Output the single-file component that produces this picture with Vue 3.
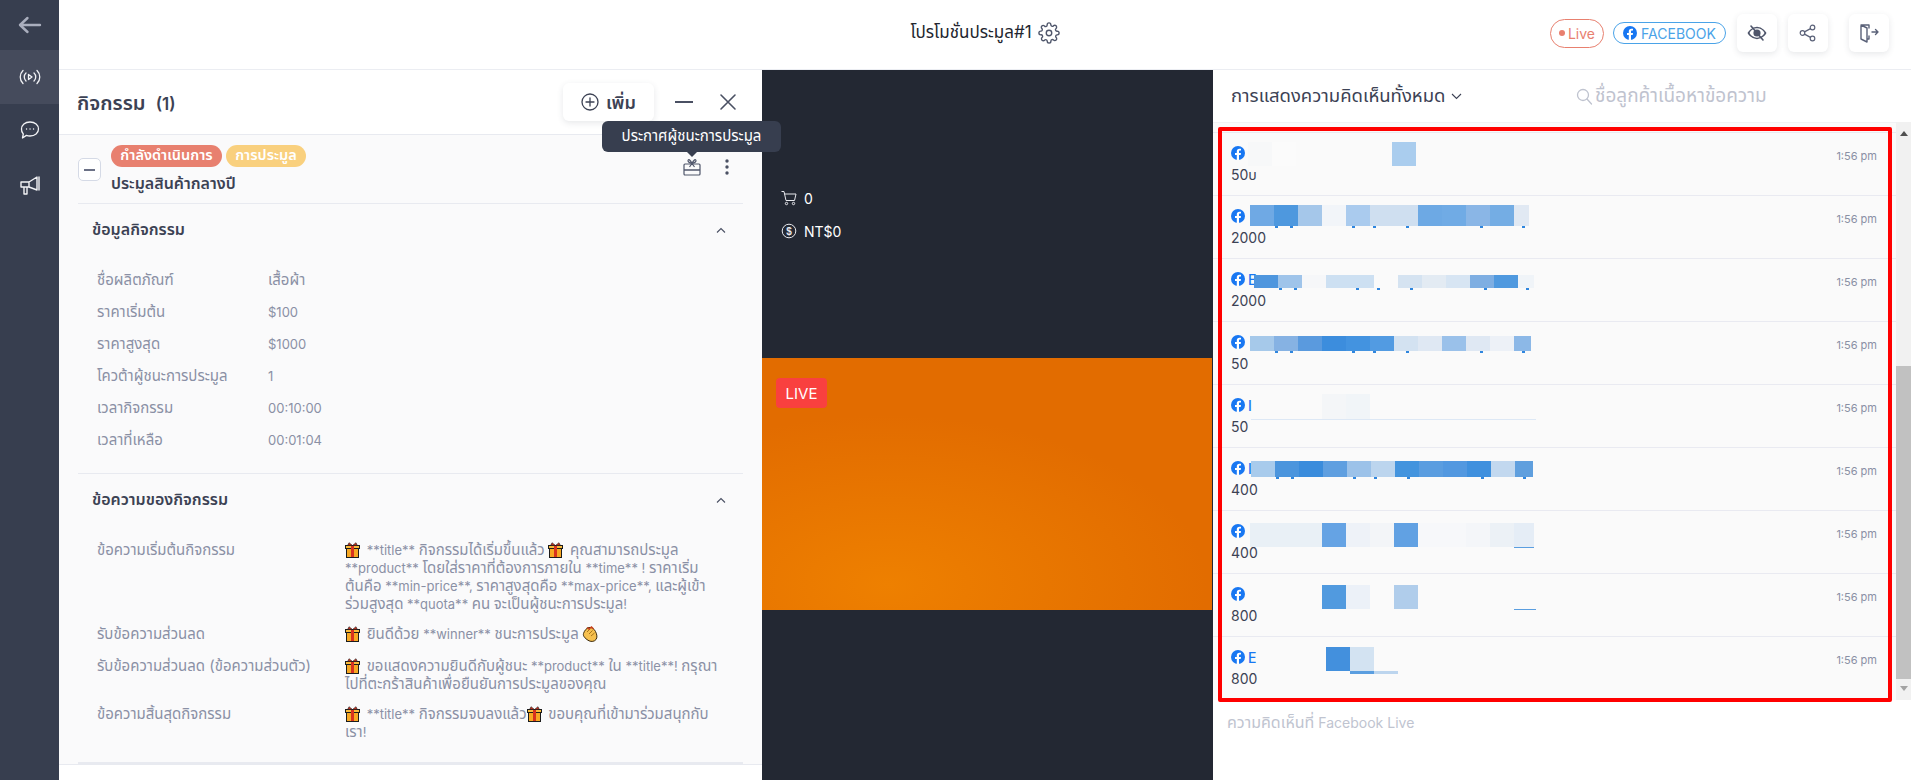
<script setup>
const infoRows = [
  ["ชื่อผลิตภัณฑ์", "เสื้อผ้า"],
  ["ราคาเริ่มต้น", "$100"],
  ["ราคาสูงสุด", "$1000"],
  ["โควต้าผู้ชนะการประมูล", "1"],
  ["เวลากิจกรรม", "00:10:00"],
  ["เวลาที่เหลือ", "00:01:04"],
]

// "gift" and "clap" are drawn as svg, everything else is plain text
const messageRows = [
  {
    label: "ข้อความเริ่มต้นกิจกรรม",
    parts: ["gift", " **title** กิจกรรมได้เริ่มขึ้นแล้ว ", "gift", " คุณสามารถประมูล\n**product** โดยใส่ราคาที่ต้องการภายใน **time** ! ราคาเริ่ม\nต้นคือ **min-price**, ราคาสูงสุดคือ **max-price**, และผู้เข้า\nร่วมสูงสุด **quota** คน จะเป็นผู้ชนะการประมูล!"],
  },
  { label: "รับข้อความส่วนลด", parts: ["gift", " ยินดีด้วย **winner** ชนะการประมูล ", "clap"] },
  {
    label: "รับข้อความส่วนลด (ข้อความส่วนตัว)",
    parts: ["gift", " ขอแสดงความยินดีกับผู้ชนะ **product** ใน **title**! กรุณา\nไปที่ตะกร้าสินค้าเพื่อยืนยันการประมูลของคุณ"],
  },
  {
    label: "ข้อความสิ้นสุดกิจกรรม",
    parts: ["gift", " **title** กิจกรรมจบลงแล้ว", "gift", " ขอบคุณที่เข้ามาร่วมสนุกกับ\nเรา!"],
  },
]

// the Thai fallback runs smaller than the latin font, so it gets its own size
const thaiRe = /([\u0E00-\u0E7F]+)/
const runs = (text) => text.split(thaiRe).filter(Boolean)
const isThai = (text) => thaiRe.test(text)

// descender specks left under the blurred names
const specks = [25, 40, 102, 123, 156, 230, 272].map((x) => [x, 3, 2, "#2f86de"])

// names are blurred in the reference, so each row keeps its mosaic cells
const comments = [
  { initial: "", text: "50บ", x: 35, y: 9, h: 24, cells: ["#f7f8f9", "#fbfbfb", null, null, null, null, "#aacdee"] },
  { initial: "", text: "2000", x: 37, y: 9, h: 21, last: 15, under: specks, cells: ["#6fa9e4", "#4e98de", "#a5c7ea", "#f2f5f9", "#aacbee", "#cfdff0", "#cfdff0", "#6da9e4", "#70abe5", "#8ab6e6", "#74ade4", "#e1e9f3"] },
  { initial: "E", text: "2000", x: 41, y: 16, h: 13, last: 16, under: specks, cells: ["#4e96de", "#9fc4ea", "#f6f7f9", "#cde0f2", "#cde0f2", null, "#d5e3f1", "#e3ebf3", "#d7e5f3", "#7eaee2", "#4f99df", "#f0f4f8"] },
  { initial: "", text: "50", x: 37, y: 14, h: 15, last: 17, under: specks, cells: ["#a6c9ea", "#86b2e3", "#5a9ade", "#3c8ddd", "#4393e0", "#529be2", "#d3e2f1", "#dfe8f3", "#9ac1ea", "#dfe8f3", "#edf1f7", "#8cb8e7"] },
  { initial: "I", text: "50", x: 37, y: 9, h: 25, under: [[1, 285, 1, "#dde8f5"]], cells: [null, null, null, "#f4f6f8", "#f1f5f8"] },
  { initial: "I", text: "400", x: 38, y: 13, h: 16, last: 18, under: specks, cells: ["#a8cbec", "#4b95dd", "#3a8cdc", "#5f9fe0", "#9cc2e9", "#bcd5ee", "#4394de", "#5a9de0", "#5298e0", "#3f90de", "#c2d8ef", "#5f9fde"] },
  { initial: "", text: "400", x: 37, y: 12, h: 24, last: 20, under: [[264, 20, 1, "#5a9ee0"]], cells: ["#e9f0f6", "#e9f0f6", "#e9f0f6", "#65a3e4", "#eef2f8", "#f3f5f8", "#61a1e3", "#f7f8fa", "#f7f8fa", "#f4f6f9", "#ecf1f6", "#e5edf6"] },
  { initial: "", text: "800", x: 37, y: 11, h: 24, under: [[264, 22, 1, "#5a9ee0"]], cells: [null, null, null, "#519adf", "#ecf1f8", null, "#b0cdeb"] },
  { initial: "E", text: "800", x: 113, y: 10, h: 24, under: [[24, 24, 3, "#5a9ee0"], [48, 24, 3, "#bcd5ee"]], cells: ["#4390dd", "#d3e3f2"] },
]
</script>

<template>
  <div class="page">
    <aside class="sidebar">
      <div class="side-item side-back">
        <svg width="24" height="20" viewBox="0 0 24 20" fill="none" stroke="#a9aebd" stroke-width="2.4" stroke-linecap="round" stroke-linejoin="round"><path d="M22 10H2M9.500 3L2 10l7.500 7" /></svg>
      </div>
      <div class="side-item side-active">
        <svg width="22" height="18" viewBox="0 0 22 18" fill="none" stroke="#f2f3f6" stroke-width="1.3" stroke-linecap="round" stroke-linejoin="round"><path d="M4 2.500a9 9 0 0 0 0 13M7 5a5.500 5.500 0 0 0 0 8M18 2.500a9 9 0 0 1 0 13M15 5a5.500 5.500 0 0 1 0 8M9.500 6.500v5l3.500-2.500z" /></svg>
      </div>
      <div class="side-item side-chat">
        <svg width="22" height="20" viewBox="0 0 22 20" fill="none" stroke="#f2f3f6" stroke-width="1.3" stroke-linecap="round" stroke-linejoin="round"><path d="M11 2c5 0 8.500 3 8.500 7s-3.500 7-8.500 7c-1.300 0-2.500-.2-3.600-.6L3.500 18l.8-4A6.600 6.600 0 0 1 2.500 9c0-4 3.500-7 8.500-7z" /><path d="M7.500 9h.1M11 9h.1M14.500 9h.1" /></svg>
      </div>
      <div class="side-item side-mega">
        <svg width="22" height="22" viewBox="0 0 22 22" fill="none" stroke="#f2f3f6" stroke-width="1.4" stroke-linecap="round" stroke-linejoin="round"><path d="M2 7h8l8-5v13l-8-3H2zM20 2v13M5 12v7h3v-7M10 7v5" /></svg>
      </div>
    </aside>

    <div class="main">
      <header class="topbar">
        <div></div>
        <div class="top-title">
          <span>โปรโมชั่นประมูล#1</span>
          <svg width="22" height="22" viewBox="0 0 24 24" fill="none" stroke="#4f566b" stroke-width="1.5" stroke-linecap="round" stroke-linejoin="round"><circle cx="12" cy="12" r="3" /><path d="M19.400 15a1.650 1.650 0 0 0 .33 1.820l.06.06a2 2 0 1 1-2.830 2.830l-.06-.06a1.650 1.650 0 0 0-2.820 1.170V21a2 2 0 1 1-4 0v-.09a1.650 1.650 0 0 0-2.800-1.170l-.06.06a2 2 0 1 1-2.830-2.830l.06-.06A1.650 1.650 0 0 0 3.090 14H3a2 2 0 1 1 0-4h.09a1.650 1.650 0 0 0 1.170-2.800l-.06-.06a2 2 0 1 1 2.830-2.830l.06.06A1.650 1.650 0 0 0 10 3.090V3a2 2 0 1 1 4 0v.09a1.650 1.650 0 0 0 2.800 1.170l.06-.06a2 2 0 1 1 2.830 2.830l-.06.06A1.650 1.650 0 0 0 20.910 10H21a2 2 0 1 1 0 4h-.09a1.650 1.650 0 0 0-1.510 1z" /></svg>
        </div>
        <div class="top-actions">
          <span class="pill-live"><i class="live-dot"></i>Live</span>
          <span class="pill-fb">
            <svg class="fb" width="14" height="14" viewBox="0 0 14 14"><circle cx="7" cy="7" r="7" fill="#1877f2" /><path d="M9.700 9l.3-2H8V5.700c0-.6.300-1.100 1.100-1.100h.9V2.900S9.200 2.800 8.400 2.800C6.800 2.800 5.800 3.700 5.800 5.500V7H4v2h1.800v5h2.200V9z" fill="#fff" /></svg>
            FACEBOOK
          </span>
          <button class="icon-btn">
            <svg width="20" height="18" viewBox="0 0 20 18" fill="none" stroke="#4f566b" stroke-width="1.600" stroke-linecap="round"><path d="M1.500 9S4.500 3.500 10 3.500 18.500 9 18.500 9 15.500 14.500 10 14.500 1.500 9 1.500 9z" /><circle cx="10" cy="9" r="2.800" fill="#4f566b" /><path d="M4 2l12 14" /></svg>
          </button>
          <button class="icon-btn">
            <svg width="18" height="18" viewBox="0 0 18 18" fill="none" stroke="#5a6178" stroke-width="1.200"><circle cx="13.500" cy="3.500" r="2.300" /><circle cx="3.500" cy="9" r="2.300" /><circle cx="13.500" cy="14.500" r="2.300" /><path d="M5.500 7.900l6-3.300M5.500 10.100l6 3.300" /></svg>
          </button>
          <button class="icon-btn exit-btn">
            <svg width="20" height="20" viewBox="0 0 20 20" fill="none" stroke="#5a6178" stroke-width="1.400" stroke-linecap="round" stroke-linejoin="round"><path d="M10 5V2H2v14l6 3V5L2 2M10 13v3H8M13 9h6M16.500 6.500L19 9l-2.500 2.500" /></svg>
          </button>
        </div>
      </header>

      <div class="content">
        <section class="panel">
          <div class="panel-head">
            <h2>กิจกรรม&nbsp; <span class="count">(1)</span></h2>
            <div class="panel-tools">
              <button class="add-btn">
                <svg width="18" height="18" viewBox="0 0 18 18" fill="none" stroke="#3c4254" stroke-width="1.300" stroke-linecap="round"><circle cx="9" cy="9" r="8" /><path d="M9 5v8M5 9h8" /></svg>
                <span class="add-text">เพิ่ม</span>
              </button>
              <svg class="tool-min" width="18" height="2" viewBox="0 0 18 2"><rect width="18" height="2" fill="#4a5063" /></svg>
              <svg class="tool-close" width="18" height="18" viewBox="0 0 18 18" stroke="#4a5063" stroke-width="1.600" stroke-linecap="round"><path d="M2 2l14 14M16 2L2 16" /></svg>
            </div>
            <div class="tooltip">ประกาศผู้ชนะการประมูล</div>
          </div>

          <div class="panel-body">
            <div class="item-head">
              <span class="collapse-box"><i></i></span>
              <div class="item-main">
                <div class="badges">
                  <span class="badge badge-red">กำลังดำเนินการ</span>
                  <span class="badge badge-yellow">การประมูล</span>
                </div>
                <div class="item-title">ประมูลสินค้ากลางปี</div>
              </div>
              <div class="item-tools">
                <svg width="18" height="18" viewBox="0 0 18 18" fill="none" stroke="#4f566b" stroke-width="1.200" stroke-linejoin="round"><rect x="1" y="6" width="16" height="11" rx="1" /><path d="M1 12h16" stroke-width="1.500" /><path d="M9 5.500C7.500 2.500 6 1 5.200 2 4.300 3.100 6 5 9 5.500zM9 5.500c1.500-3 3-4.500 3.800-3.500.9 1.100-.8 3-3.800 3.500zM9 5.500L6.500 9M9 5.500L11.500 9" /></svg>
                <svg width="4" height="16" viewBox="0 0 4 16" fill="#4a5063"><circle cx="2" cy="2" r="1.700" /><circle cx="2" cy="8" r="1.700" /><circle cx="2" cy="14" r="1.700" /></svg>
              </div>
            </div>

            <div class="section">
              <div class="section-head">
                <span class="section-title">ข้อมูลกิจกรรม</span>
                <svg width="10" height="6" viewBox="0 0 10 6" fill="none" stroke="#4a5063" stroke-width="1.100"><path d="M1 5.500l4-4 4 4" /></svg>
              </div>
              <div class="info-rows">
                <div v-for="row in infoRows" :key="row[0]" class="info-row">
                  <span class="info-label">{{ row[0] }}</span>
                  <span :class="{ th: isThai(row[1]) }">{{ row[1] }}</span>
                </div>
              </div>
            </div>

            <div class="section section-last">
              <div class="section-head">
                <span class="section-title">ข้อความของกิจกรรม</span>
                <svg width="10" height="6" viewBox="0 0 10 6" fill="none" stroke="#4a5063" stroke-width="1.100"><path d="M1 5.500l4-4 4 4" /></svg>
              </div>
              <div class="msg-rows">
                <div v-for="row in messageRows" :key="row.label" class="msg-row">
                  <span class="msg-label">{{ row.label }}</span>
                  <div class="msg-text">
                    <template v-for="(part, i) in row.parts" :key="i">
                      <svg v-if="part === 'gift'" class="emoji" width="15" height="16" viewBox="0 0 15 16"><rect x="1.500" y="6" width="12" height="9.500" fill="#f7a823" stroke="#1c1c1c" /><rect x=".5" y="3.500" width="14" height="3" fill="#f9bb3c" stroke="#1c1c1c" /><rect x="6" y="4" width="3" height="11" fill="#d8321f" /><path d="M7.500 3.500L4 .7 2.800 3.200zM7.500 3.500L11 .7l1.200 2.500z" fill="#d8321f" stroke="#1c1c1c" stroke-width=".6" /></svg>
                      <svg v-else-if="part === 'clap'" class="emoji" width="16" height="16" viewBox="0 0 16 16"><path d="M1.500 7.500C2.500 4.500 4.500 2 7 1.500c2.500-.5 5 1 6.500 4 1.500 3 2 6 .5 8s-4.500 2.500-7 1.300C4.500 13.500.5 10.500 1.500 7.500z" fill="#f6c04e" stroke="#3d2a0c" /><path d="M5 6l3-3M7 8l3.500-3.500M9 10l3.500-3" stroke="#a9741c" fill="none" /><path d="M5 1.500l2 1.500 2.500-2 2 2" stroke="#c8401e" stroke-width="1.400" fill="none" /></svg>
                      <template v-else>
                        <span v-for="(run, j) in runs(part)" :key="j" :class="{ th: isThai(run) }">{{ run }}</span>
                      </template>
                    </template>
                  </div>
                </div>
              </div>
            </div>
          </div>
        </section>

        <section class="stage">
          <div class="stats">
            <div class="stat">
              <svg width="16" height="16" viewBox="0 0 16 16" fill="none" stroke="#e8e9ee" stroke-width="1"><path d="M.5 1.500h2.500l2 9h8.500L15 4H3.500" /><circle cx="5.500" cy="13.500" r="1.200" /><circle cx="12.500" cy="13.500" r="1.200" /></svg>
              <span>0</span>
            </div>
            <div class="stat">
              <svg width="16" height="16" viewBox="0 0 16 16" fill="none" stroke="#e8e9ee" stroke-width="1"><circle cx="8" cy="8" r="6.800" /><text x="8" y="11.500" text-anchor="middle" font-size="10" font-weight="700" fill="#e8e9ee" stroke="none" font-family="'Liberation Sans', sans-serif">$</text></svg>
              <span>NT$0</span>
            </div>
          </div>
          <div class="video">
            <span class="live-tag">LIVE</span>
          </div>
        </section>

        <section class="comments">
          <div class="comments-head">
            <div class="filter">
              การแสดงความคิดเห็นทั้งหมด
              <svg width="11" height="7" viewBox="0 0 11 7" fill="none" stroke="#3c4254" stroke-width="1.100"><path d="M1 1l4.500 4.500L10 1" /></svg>
            </div>
            <div class="search">
              <svg width="17" height="17" viewBox="0 0 17 17" fill="none" stroke="#bfc3cf" stroke-width="1.300" stroke-linecap="round"><circle cx="7" cy="7" r="5.500" /><path d="M11 11l4.500 5" /></svg>
              ชื่อลูกค้าเนื้อหาข้อความ
            </div>
          </div>

          <div class="list-wrap">
            <div class="list">
              <div v-for="(c, i) in comments" :key="i" class="row">
                <div class="row-left">
                  <div class="row-name">
                    <svg class="fb" width="14" height="14" viewBox="0 0 14 14"><circle cx="7" cy="7" r="7" fill="#1877f2" /><path d="M9.700 9l.3-2H8V5.700c0-.6.300-1.100 1.100-1.100h.9V2.900S9.200 2.800 8.400 2.800C6.800 2.800 5.800 3.700 5.800 5.500V7H4v2h1.800v5h2.200V9z" fill="#fff" /></svg>
                    <span>{{ c.initial }}</span>
                  </div>
                  <div class="row-text">{{ c.text }}</div>
                </div>
                <span class="row-time">1:56 pm</span>
                <div class="mosaic" :style="{ left: c.x + 'px', top: c.y + 'px', height: c.h + 'px' }">
                  <i v-for="(cell, j) in c.cells" :key="j" :style="{ background: cell || 'transparent', width: (j === c.cells.length - 1 && c.last ? c.last : 24) + 'px' }"></i>
                  <b v-for="(u, j) in c.under || []" :key="'u' + j" :style="{ left: u[0] + 'px', width: u[1] + 'px', height: u[2] + 'px', background: u[3] }"></b>
                </div>
              </div>
            </div>
            <div class="scrollbar">
              <span class="arrow-up"></span>
              <div class="thumb"></div>
              <span class="arrow-down"></span>
            </div>
            <div class="red-box"></div>
          </div>

          <div class="comments-foot">
            <span v-for="(run, j) in runs('ความคิดเห็นที่ Facebook Live')" :key="j" :class="{ th: isThai(run) }">{{ run }}</span>
          </div>
        </section>
      </div>
    </div>
  </div>
</template>

<style>
body {
  background: #fff;
}
</style>

<style scoped>
.page {
  display: flex;
  width: 1911px;
  height: 780px;
  overflow: hidden;
  font-family: Inter, "Noto Sans", "Noto Sans Thai", sans-serif;
  color: #3c4254;
  background: #fff;
}

button {
  border: none;
  background: #fff;
  font: inherit;
  color: inherit;
  padding: 0;
}

.sidebar {
  width: 59px;
  flex: none;
  background: #373e4f;
}

.side-item {
  height: 54px;
  display: flex;
  align-items: center;
  justify-content: center;
}

.side-back {
  height: 50px;
}

.side-active {
  background: #454b5c;
}

.side-chat {
  height: 52px;
}

.side-mega {
  height: 60px;
}

.main {
  flex: 1;
  min-width: 0;
  display: flex;
  flex-direction: column;
}

.topbar {
  height: 70px;
  flex: none;
  box-sizing: border-box;
  border-bottom: 1px solid #ebedf2;
  padding-bottom: 3px;
  display: grid;
  grid-template-columns: 1fr auto 1fr;
  align-items: center;
}

.top-title {
  display: flex;
  align-items: center;
  gap: 6px;
  font-size: 17px;
  color: #23262f;
}

.top-actions {
  display: flex;
  align-items: center;
  justify-content: flex-end;
  padding-right: 22px;
  gap: 9px;
}

.pill-live {
  box-sizing: border-box;
  width: 54px;
  height: 29px;
  border: 1px solid #e8806f;
  border-radius: 15px;
  color: #e8806f;
  font-size: 14px;
  display: flex;
  align-items: center;
  justify-content: center;
  gap: 3px;
}

.live-dot {
  width: 6px;
  height: 6px;
  border-radius: 50%;
  background: #e8806f;
}

.pill-fb {
  box-sizing: border-box;
  width: 113px;
  height: 22px;
  border: 1px solid #4aa3e8;
  border-radius: 11px;
  color: #4aa3e8;
  font-size: 14px;
  display: flex;
  align-items: center;
  justify-content: center;
  gap: 4px;
}

.icon-btn {
  width: 40px;
  height: 38px;
  border-radius: 6px;
  box-shadow: 0 2px 6px rgba(60, 66, 84, 0.12);
  display: flex;
  align-items: center;
  justify-content: center;
  margin-left: 2px;
}

.exit-btn {
  margin-left: 12px;
}

.content {
  flex: 1;
  min-height: 0;
  display: flex;
}

.panel {
  width: 703px;
  flex: none;
  display: flex;
  flex-direction: column;
}

.panel-head {
  position: relative;
  height: 65px;
  flex: none;
  box-sizing: border-box;
  border-bottom: 1px solid #e8eaf0;
  padding: 0 25px 0 18px;
  display: flex;
  align-items: center;
  justify-content: space-between;
}

.panel-head h2 {
  margin: 4px 0 0;
  font-size: 20px;
  font-weight: 600;
  color: #3c4254;
}

.count {
  font-size: 17px;
}

.panel-tools {
  display: flex;
  align-items: center;
}

.add-btn {
  width: 91px;
  height: 38px;
  border-radius: 6px;
  box-shadow: 0 2px 6px rgba(60, 66, 84, 0.12);
  display: flex;
  align-items: center;
  justify-content: center;
  gap: 7px;
  font-size: 18px;
  font-weight: 600;
}

.add-text {
  padding-top: 3px;
}

.tool-min {
  margin-left: 21px;
}

.tool-close {
  margin-left: 26px;
}

.tooltip {
  position: absolute;
  z-index: 3;
  left: 543px;
  top: 51px;
  width: 179px;
  height: 31px;
  border-radius: 6px;
  background: #373e4f;
  color: #fff;
  font-size: 15px;
  display: flex;
  align-items: center;
  justify-content: center;
}

.tooltip::after {
  content: "";
  position: absolute;
  left: 85px;
  bottom: -5px;
  border-left: 5px solid transparent;
  border-right: 5px solid transparent;
  border-top: 5px solid #373e4f;
}

.panel-body {
  background: #fafafb;
  padding: 0 19px;
  height: 630px;
  box-sizing: border-box;
  border-bottom: 1px solid #e8eaf0;
}

.item-head {
  height: 69px;
  box-sizing: border-box;
  border-bottom: 1px solid #e8eaf0;
  display: flex;
  align-items: flex-start;
  padding-top: 10px;
}

.collapse-box {
  box-sizing: border-box;
  width: 23px;
  height: 23px;
  margin-top: 13px;
  border: 1px solid #d5dae6;
  border-radius: 5px;
  background: #fff;
  display: flex;
  align-items: center;
  justify-content: center;
}

.collapse-box i {
  width: 11px;
  height: 2px;
  background: #6b7186;
}

.item-main {
  flex: 1;
  margin-left: 10px;
}

.badges {
  display: flex;
  gap: 4px;
}

.badge {
  height: 22px;
  border-radius: 11px;
  color: #fff;
  font-size: 14.5px;
  font-weight: 600;
  display: flex;
  align-items: center;
  justify-content: center;
}

.badge-red {
  width: 111px;
  background: #e8806f;
}

.badge-yellow {
  width: 80px;
  background: #f9d07e;
}

.item-title {
  margin-top: 6px;
  font-size: 16px;
  font-weight: 600;
  color: #3c4254;
  line-height: 20px;
}

.item-tools {
  display: flex;
  align-items: center;
  gap: 24px;
  padding: 13px 14px 0 0;
}

.section {
  box-sizing: border-box;
  height: 270px;
  border-bottom: 1px solid #e8eaf0;
}

.section-last {
  border-bottom: 2px solid #e8eaf0;
  height: 290px;
}

.section-head {
  height: 54px;
  box-sizing: border-box;
  padding: 0 17px 3px 14px;
  display: flex;
  align-items: center;
  justify-content: space-between;
}

.section-title {
  font-size: 16px;
  font-weight: 600;
  color: #3c4254;
}

.info-rows {
  padding: 6px 0 0 19px;
  font-size: 13px;
  color: #8a90a5;
}

.info-row {
  height: 32px;
  display: flex;
  align-items: center;
}

.info-label {
  width: 171px;
  font-size: 15px;
}

.th {
  font-size: 15px;
}

.msg-rows {
  padding: 13px 0 0 19px;
  font-size: 13px;
  line-height: 18px;
  color: #8a90a5;
  display: flex;
  flex-direction: column;
  gap: 12px;
}

.msg-row {
  display: flex;
}

.msg-row:nth-child(2) {
  padding-bottom: 2px;
}

.msg-label {
  width: 248px;
  flex: none;
  font-size: 15px;
}

.msg-text {
  flex: 1;
  white-space: pre-line;
}

.emoji {
  vertical-align: -3px;
  margin-right: 3px;
}

.stage {
  width: 451px;
  flex: none;
  background: #232833;
  color: #fff;
}

.stats {
  padding: 118px 0 0 19px;
  height: 170px;
  box-sizing: border-box;
  font-size: 14px;
}

.stat {
  display: flex;
  align-items: center;
  gap: 7px;
  height: 20px;
  margin-bottom: 13px;
}

.video {
  position: relative;
  margin-top: 118px;
  width: 450px;
  height: 252px;
  background: radial-gradient(ellipse 320px 170px at 28% 90%, #ee8000 0%, rgba(238, 128, 0, 0) 100%), #e26c00;
}

.live-tag {
  position: absolute;
  left: 14px;
  top: 20px;
  width: 51px;
  height: 30px;
  border-radius: 4px;
  background: #f9403f;
  color: #fff;
  font-size: 15px;
  display: flex;
  align-items: center;
  justify-content: center;
}

.comments {
  flex: 1;
  min-width: 0;
  display: flex;
  flex-direction: column;
}

.comments-head {
  height: 52px;
  flex: none;
  display: flex;
  align-items: center;
  padding-left: 18px;
}

.filter {
  width: 345px;
  display: flex;
  align-items: center;
  gap: 6px;
  font-size: 18.5px;
  color: #3c4254;
}

.search {
  display: flex;
  align-items: center;
  gap: 2px;
  font-size: 19px;
  color: #bfc3cf;
}

.list-wrap {
  position: relative;
  display: flex;
  height: 578px;
  flex: none;
}

.list {
  flex: 1;
  box-sizing: border-box;
  padding-top: 9px;
  background: #fafafa;
  border-top: 1px solid #f2f2f4;
}

.row {
  position: relative;
  height: 63px;
  box-sizing: border-box;
  border-top: 1px solid #e9eaf1;
  padding: 11px 19px 0 18px;
  display: flex;
  justify-content: space-between;
  align-items: flex-start;
}

.row-name {
  height: 18px;
  display: flex;
  align-items: center;
  gap: 3px;
  font-size: 14px;
  font-weight: 500;
  color: #1877f2;
}

.row-text {
  margin-top: 3px;
  font-size: 14px;
  line-height: 20px;
  color: #3c4254;
}

.row-time {
  margin-top: 4px;
  font-size: 11px;
  line-height: 16px;
  color: #8a90a5;
}

.mosaic {
  position: absolute;
  display: flex;
}

.mosaic i {
  flex: none;
}

.mosaic b {
  position: absolute;
  top: 100%;
}

.scrollbar {
  width: 15px;
  flex: none;
  background: #f1f1f1;
  display: flex;
  flex-direction: column;
  align-items: center;
}

.thumb {
  width: 100%;
  height: 313px;
  margin-top: 230px;
  background: #c1c1c1;
}

.arrow-up {
  margin-top: 9px;
  border-left: 4px solid transparent;
  border-right: 4px solid transparent;
  border-bottom: 5px solid #505050;
}

.arrow-down {
  margin-top: 7px;
  border-left: 4px solid transparent;
  border-right: 4px solid transparent;
  border-top: 5px solid #a3a3a3;
}

.red-box {
  position: absolute;
  left: 5px;
  top: 5px;
  width: 674px;
  height: 575px;
  box-sizing: border-box;
  border: 4px solid #f00;
  border-radius: 2px;
}

.comments-foot {
  padding: 12px 0 0 14px;
  font-size: 14px;
  line-height: 20px;
  color: #c0c4d0;
}

.comments-foot .th {
  font-size: 16px;
}
</style>
